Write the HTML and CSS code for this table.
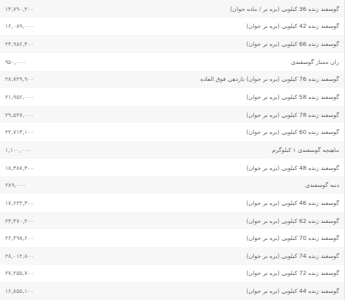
FILE: index.html
```html
<!DOCTYPE html>
<html lang="fa" dir="rtl">
<head>
<meta charset="utf-8">
<link rel="stylesheet" href="styles.css">
</head>
<body>
<div class="table">
  <div class="row"><span class="name">گوسفند زنده 36 کیلویی (بره نر / ماده جوان)</span><span class="price">۱۳,۷۹۰,۲۰۰</span></div>
  <div class="row"><span class="name">گوسفند زنده 42 کیلویی (بره نر جوان)</span><span class="price">۱۶,۰۸۹,۰۰۰</span></div>
  <div class="row"><span class="name">گوسفند زنده 66 کیلویی (بره نر جوان)</span><span class="price">۲۴,۹۸۶,۴۰۰</span></div>
  <div class="row"><span class="name">ران ممتاز گوسفندی</span><span class="price">۹۵۰,۰۰۰</span></div>
  <div class="row"><span class="name">گوسفند زنده 76 کیلویی (بره نر جوان) بازدهی فوق العاده</span><span class="price">۲۸,۷۲۹,۹۰۰</span></div>
  <div class="row"><span class="name">گوسفند زنده 58 کیلویی (بره نر جوان)</span><span class="price">۲۱,۹۵۶,۰۰۰</span></div>
  <div class="row"><span class="name">گوسفند زنده 78 کیلویی (بره نر جوان)</span><span class="price">۲۹,۵۲۷,۰۰۰</span></div>
  <div class="row"><span class="name">گوسفند زنده 60 کیلویی (بره نر جوان)</span><span class="price">۲۲,۷۱۳,۱۰۰</span></div>
  <div class="row"><span class="name">ماهیچه گوسفندی ۱ کیلوگرم</span><span class="price">۱,۱۰۰,۰۰۰</span></div>
  <div class="row"><span class="name">گوسفند زنده 48 کیلویی (بره نر جوان)</span><span class="price">۱۸,۳۸۷,۴۰۰</span></div>
  <div class="row"><span class="name">دنبه گوسفندی</span><span class="price">۲۸۹,۰۰۰</span></div>
  <div class="row"><span class="name">گوسفند زنده 46 کیلویی (بره نر جوان)</span><span class="price">۱۷,۶۲۲,۳۰۰</span></div>
  <div class="row"><span class="name">گوسفند زنده 62 کیلویی (بره نر جوان)</span><span class="price">۲۳,۴۷۰,۲۰۰</span></div>
  <div class="row"><span class="name">گوسفند زنده 70 کیلویی (بره نر جوان)</span><span class="price">۲۶,۴۹۸,۶۰۰</span></div>
  <div class="row"><span class="name">گوسفند زنده 74 کیلویی (بره نر جوان)</span><span class="price">۲۸,۰۱۲,۸۰۰</span></div>
  <div class="row"><span class="name">گوسفند زنده 72 کیلویی (بره نر جوان)</span><span class="price">۲۷,۲۵۵,۷۰۰</span></div>
  <div class="row"><span class="name">گوسفند زنده 44 کیلویی (بره نر جوان)</span><span class="price">۱۶,۸۵۵,۱۰۰</span></div>
</div>
</body>
</html>
```
FILE: styles.css
```css
html, body {
  margin: 0;
  padding: 0;
  background: #ffffff;
}
body {
  font-family: "DejaVu Sans", sans-serif;
  color: #666666;
}
.table {
  display: grid;
  grid-template-rows: repeat(17, 17.647px);
  border-right: 1px solid #e6e6e6;
  width: 344px;
}
.row {
  display: flex;
  align-items: center;
  justify-content: space-between;
  padding: 0 5px 0 5px;
  font-size: 5.8px;
  white-space: nowrap;
}
.row:nth-child(odd) {
  background: #f7f7f7;
}
.price {
  direction: ltr;
  font-size: 5.8px;
  color: #777777;
}
```
